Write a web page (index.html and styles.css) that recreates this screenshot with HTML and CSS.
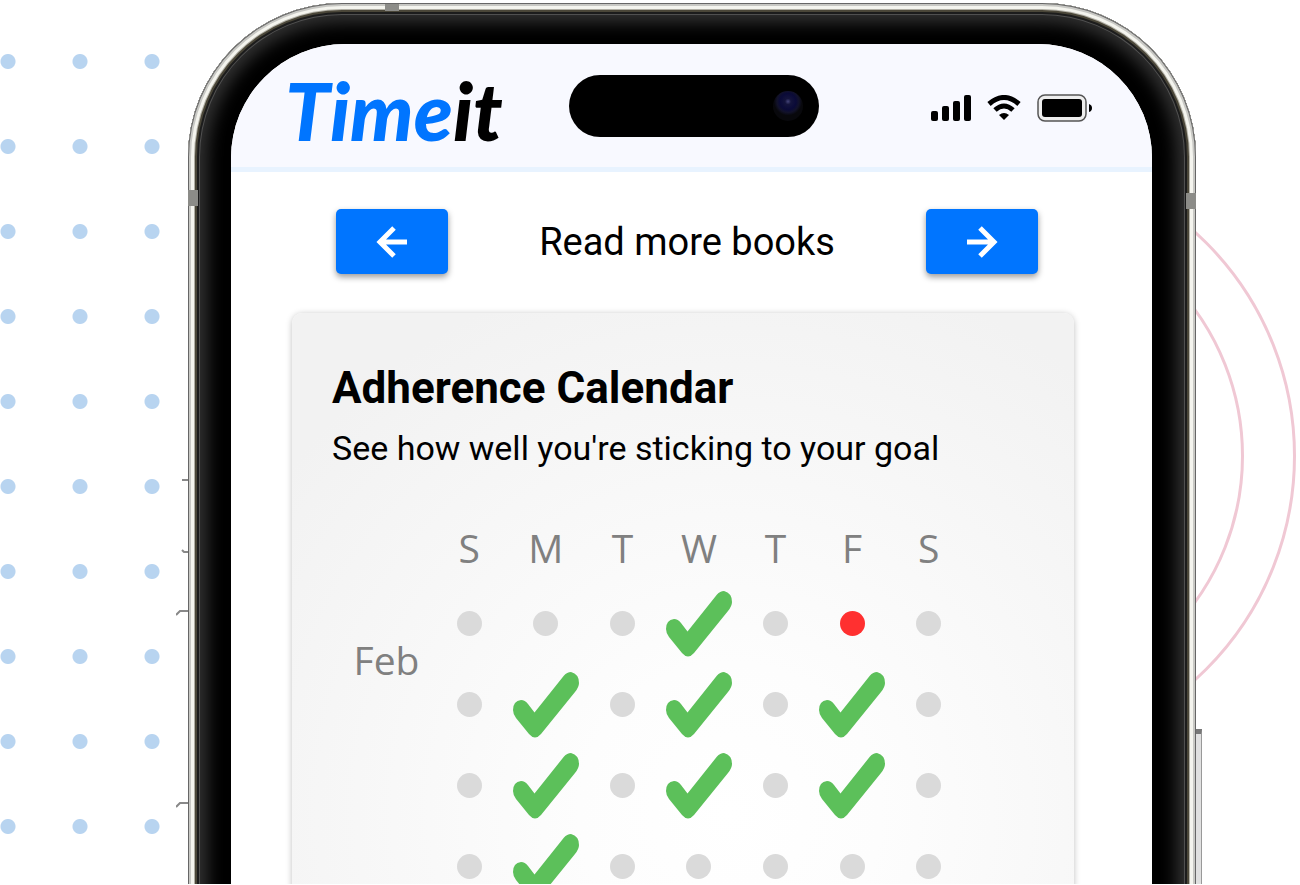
FILE: index.html
```
<!DOCTYPE html>
<html lang="en">
<head>
    <meta charset="UTF-8">
    <meta name="viewport" content="width=device-width, initial-scale=1.0">
    <title>Timeit</title>
    <link rel="stylesheet" href="styles.css">
</head>
<body>
    <svg class="sprite" aria-hidden="true">
        <symbol id="check" viewBox="0 0 66 66">
            <path d="M8 28Q12 28 15 32L21.500 40.500L51 3.500Q54 0 58 0Q66 2 66 11Q66 15 62 20L28 62Q22 69 16 62L3 46Q0 42 0 38Q0 29 8 28Z" fill="#5cc05a"/>
        </symbol>
    </svg>

    <div class="scene">
        <div class="dots"></div>
        <div class="ring ring-outer"></div>
        <div class="ring ring-inner"></div>
        <svg class="side-keys" viewBox="0 0 12 340" width="12" height="340" aria-hidden="true">
            <path d="M6 5H12M6 75L8 77H12M0 140L4 136H12M0 332L4 328H12" fill="none" stroke="#888" stroke-width="2"/>
        </svg>
        <div class="power-key"></div>

        <div class="phone">
            <span class="band band-top"></span>
            <span class="band band-left"></span>
            <span class="band band-right"></span>

            <div class="screen">
                <header class="top-bar">
                    <div class="logo"><span>Time</span>it</div>
                    <div class="island"><div class="camera"></div></div>
                    <div class="status">
                        <svg width="40" height="28" viewBox="0 0 40 28" aria-hidden="true">
                            <rect x="0" y="17" width="7" height="10" rx="2"/>
                            <rect x="11" y="12" width="7" height="15" rx="2"/>
                            <rect x="22" y="7" width="7" height="20" rx="2"/>
                            <rect x="33" y="1" width="7" height="26" rx="2"/>
                        </svg>
                        <svg width="34" height="26" viewBox="0 0 34 26" aria-hidden="true">
                            <path d="M2 9Q17 -4 32 9" fill="none" stroke="#000" stroke-width="5"/>
                            <path d="M8 15Q17 7 26 15" fill="none" stroke="#000" stroke-width="5"/>
                            <path d="M12 20Q17 16 22 20L17 25Z"/>
                        </svg>
                        <svg width="55" height="28" viewBox="0 0 55 28" aria-hidden="true">
                            <rect x="1" y="1" width="48" height="26" rx="7" fill="#eee" stroke="#555" stroke-width="1.500"/>
                            <rect x="5" y="5" width="40" height="18" rx="3"/>
                            <path d="M52 10Q55 11 55 14Q55 17 52 18Z"/>
                        </svg>
                    </div>
                </header>

                <main>
                    <nav class="goal-nav">
                        <button type="button" aria-label="Previous goal">
                            <svg width="32" height="32" viewBox="0 0 32 32"><path d="M31 16H4M18 2L4 16L18 30"/></svg>
                        </button>
                        <h1>Read more books</h1>
                        <button type="button" aria-label="Next goal">
                            <svg width="32" height="32" viewBox="0 0 32 32"><path d="M1 16H28M14 2L28 16L14 30"/></svg>
                        </button>
                    </nav>

                    <section class="card">
                        <h2>Adherence Calendar</h2>
                        <p>See how well you're sticking to your goal</p>

                        <table class="calendar">
                            <thead>
                                <tr><td class="month"></td><th>S</th><th>M</th><th>T</th><th>W</th><th>T</th><th>F</th><th>S</th></tr>
                            </thead>
                            <tbody>
                                <tr>
                                    <th class="month" rowspan="2">Feb</th>
                                    <td><i class="dot"></i></td>
                                    <td><i class="dot"></i></td>
                                    <td><i class="dot"></i></td>
                                    <td><svg class="check"><use href="#check"/></svg></td>
                                    <td><i class="dot"></i></td>
                                    <td><i class="dot missed"></i></td>
                                    <td><i class="dot"></i></td>
                                </tr>
                                <tr>
                                    <td><i class="dot"></i></td>
                                    <td><svg class="check"><use href="#check"/></svg></td>
                                    <td><i class="dot"></i></td>
                                    <td><svg class="check"><use href="#check"/></svg></td>
                                    <td><i class="dot"></i></td>
                                    <td><svg class="check"><use href="#check"/></svg></td>
                                    <td><i class="dot"></i></td>
                                </tr>
                                <tr>
                                    <td></td>
                                    <td><i class="dot"></i></td>
                                    <td><svg class="check"><use href="#check"/></svg></td>
                                    <td><i class="dot"></i></td>
                                    <td><svg class="check"><use href="#check"/></svg></td>
                                    <td><i class="dot"></i></td>
                                    <td><svg class="check"><use href="#check"/></svg></td>
                                    <td><i class="dot"></i></td>
                                </tr>
                                <tr>
                                    <td></td>
                                    <td><i class="dot"></i></td>
                                    <td><svg class="check"><use href="#check"/></svg></td>
                                    <td><i class="dot"></i></td>
                                    <td><i class="dot"></i></td>
                                    <td><i class="dot"></i></td>
                                    <td><i class="dot"></i></td>
                                    <td><i class="dot"></i></td>
                                </tr>
                            </tbody>
                        </table>
                    </section>
                </main>
            </div>
        </div>
    </div>
</body>
</html>
```
FILE: styles.css
```
* {
    box-sizing: border-box;
}
body {
    margin: 0;
    background-color: #fff;
    font-family: Roboto, sans-serif;
    color: #000;
}
.sprite {
    position: absolute;
    width: 0;
    height: 0;
}
.scene {
    position: relative;
    display: flex;
    height: calc(100vh - 1px);
    padding: 3px 104px 0 188px;
    overflow: hidden;
}

/* background decoration */
.dots {
    position: absolute;
    top: 19px;
    left: -28px;
    bottom: 16px;
    width: 216px;
    background-image: radial-gradient(circle, #b8d4f0 7px, transparent 8px);
    background-size: 72px 85px;
}
.ring {
    position: absolute;
    border: 3px solid #f0c8d4;
    border-radius: 50%;
}
.ring-outer {
    top: 153px;
    right: 4px;
    width: 606px;
    height: 606px;
}
.ring-inner {
    top: 206px;
    right: 56px;
    width: 500px;
    height: 500px;
}
.side-keys {
    position: absolute;
    top: 475px;
    left: 176px;
}
.power-key {
    position: absolute;
    top: 729px;
    right: 98px;
    bottom: 0;
    width: 10px;
    background-color: #e0e0e0;
    border-top: 5px solid #777;
    border-right: 1px solid #999;
}

/* phone */
.phone {
    position: relative;
    flex: 1;
    height: 1400px;
    padding: 41px 44px 0 43px;
    border-radius: 154px;
    background-color: #000;
    box-shadow:
        inset 0 0 0 1px #666,
        inset 0 0 0 3px #c8c8c4,
        inset 0 0 0 6px #f4f4ee,
        inset 0 0 0 7px #b0aea4,
        inset 0 0 0 9px #4a4638,
        inset 0 0 0 11px #1c1c1c,
        inset 0 0 0 12px #505050,
        inset 0 0 16px 20px #303030;
}
.band {
    position: absolute;
    background-color: #8c8c88;
}
.band-top {
    top: 1px;
    left: 197px;
    width: 14px;
    height: 7px;
}
.band-left {
    top: 187px;
    left: 0;
    width: 10px;
    height: 16px;
}
.band-right {
    top: 190px;
    right: 0;
    width: 10px;
    height: 16px;
}
.screen {
    height: 100%;
    overflow: hidden;
    border-radius: 114px 114px 0 0;
    background-color: #fff;
}

.top-bar {
    display: grid;
    grid-template-columns: 1fr auto 1fr;
    align-items: center;
    height: 128px;
    padding: 0 50px 0 54px;
    background-color: #f8f9ff;
    border-bottom: 5px solid #e8f3ff;
}
.logo {
    padding-top: 8px;
    font-family: Lato, sans-serif;
    font-size: 80px;
    font-style: italic;
    font-weight: 900;
    line-height: 80px;
}
.logo span {
    color: #0075ff;
}
.island {
    display: flex;
    align-items: center;
    justify-content: flex-end;
    width: 250px;
    height: 62px;
    padding-right: 16px;
    border-radius: 31px;
    background-color: #000;
}
.camera {
    width: 30px;
    height: 30px;
    border-radius: 50%;
    background: radial-gradient(circle at 50% 35%, #44447a 0, #14143c 3px, #0a0a38 8px, #12122a 11px, #08080c 14px);
}
.status {
    display: flex;
    align-items: center;
    justify-content: flex-end;
    gap: 16px;
    padding-top: 4px;
    margin-right: 10px;
}

main {
    padding: 37px 78px 0 61px;
}
.goal-nav {
    display: flex;
    align-items: center;
    justify-content: space-between;
    padding: 0 36px 0 44px;
}
.goal-nav h1 {
    margin: 0;
    font-size: 38px;
    font-weight: 400;
    line-height: 64px;
}
.goal-nav button {
    display: flex;
    align-items: center;
    justify-content: center;
    width: 112px;
    height: 65px;
    padding: 0;
    border: 0;
    border-radius: 5px;
    background-color: #0075ff;
    box-shadow: 0 3px 6px rgba(0, 0, 0, 0.4);
}
.goal-nav path {
    fill: none;
    stroke: #fff;
    stroke-width: 5px;
}

.card {
    height: 900px;
    margin-top: 39px;
    padding: 45px 40px 0;
    border-radius: 10px;
    background: radial-gradient(circle at 56% 500px, #fff 0, #fdfdfd 150px, #f2f2f2 560px);
    box-shadow: 0 1px 6px rgba(0, 0, 0, 0.25);
}
.card h2 {
    margin: 0;
    font-size: 44px;
    font-weight: 700;
    line-height: 60px;
}
.card p {
    margin: 0;
    font-size: 34px;
    line-height: 60px;
}

.calendar {
    width: 635px;
    margin-top: 34px;
    border-collapse: collapse;
    table-layout: fixed;
    font-family: "Open Sans", sans-serif;
    color: #808080;
}
.calendar th,
.calendar td {
    height: 81px;
    padding: 0;
    font-size: 39px;
    font-weight: 400;
    line-height: 40px;
    text-align: center;
    vertical-align: middle;
}
.calendar thead th,
.calendar thead td {
    height: 71px;
}
.calendar .month {
    width: 99px;
    padding: 0 0 8px 10px;
}
.dot {
    display: block;
    width: 25px;
    height: 25px;
    margin: 0 auto;
    border-radius: 50%;
    background-color: #dadada;
}
.missed {
    background-color: #ff3030;
}
.check {
    display: block;
    width: 66px;
    height: 66px;
    margin: 0 auto;
}
```
